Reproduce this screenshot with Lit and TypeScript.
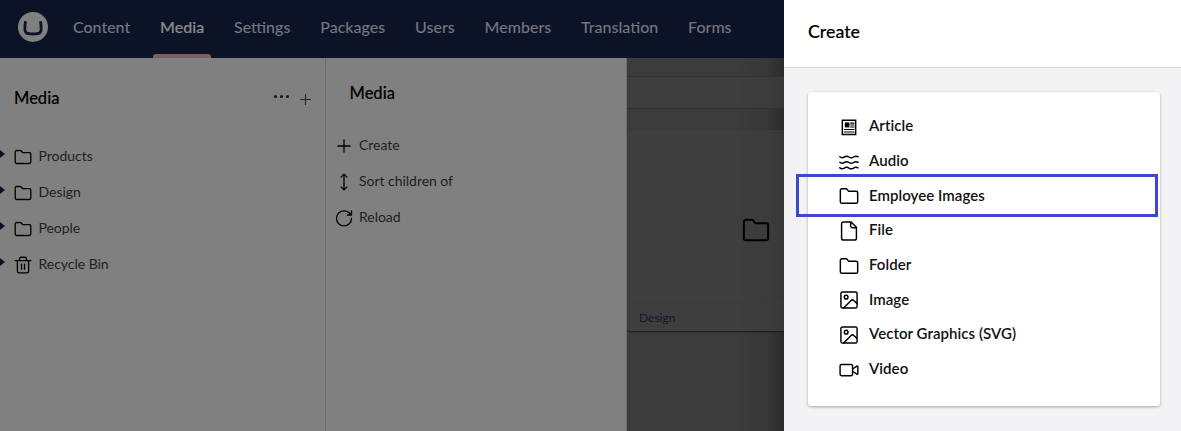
import { LitElement, html, css, svg, nothing } from "lit";
import { customElement, property } from "lit/decorators.js";
import { classMap } from "lit/directives/class-map.js";

const FOLDER = svg`<path d="M1.600 18.800V5.200A1.900 1.900 0 0 1 3.500 3.300H8.200a1.900 1.900 0 0 1 1.500.7l1.700 2.200h9.100a1.900 1.900 0 0 1 1.900 1.900v10.700a1.900 1.900 0 0 1-1.900 1.900H3.500a1.900 1.900 0 0 1-1.900-1.900z"/>`;
const IMAGE = svg`<rect x="2.300" y="2.300" width="19.400" height="19.400" rx="2"/><circle cx="8.600" cy="8.600" r="2.200"/><path d="M5.500 21.500 14.600 12.600a2.200 2.200 0 0 1 3.100 0L21.500 16"/>`;

const ICONS: Record<string, unknown> = {
  folder: FOLDER,
  image: IMAGE,
  trash: svg`<path d="M1.500 6.200h21M19.500 6.500v13.700a2.200 2.200 0 0 1-2.200 2.200H6.700a2.200 2.200 0 0 1-2.200-2.200V6.500M7.500 6V3.700a2 2 0 0 1 2-2h5a2 2 0 0 1 2 2V6M10 11v6.500M14 11v6.500"/>`,
  plus: svg`<path d="M4 12h16M12 4v16"/>`,
  sort: svg`<path d="M12 1.500v21M8 18.500l4 4 4-4M8 5.500l4-4 4 4"/>`,
  reload: svg`<path d="M22 12.500a10 10 0 1 1-10-10c2.800 0 5.200 1 7.200 2.800L22 8M22 2.500V8h-5.500"/>`,
  file: svg`<path d="M14.500 1.200H5.300a2.200 2.200 0 0 0-2.200 2.200v17.200a2.200 2.200 0 0 0 2.200 2.200h13.400a2.200 2.200 0 0 0 2.200-2.200V7.500zM14 1.500v4.500a2 2 0 0 0 2 2h4.500"/>`,
  video: svg`<rect x="1.300" y="5.500" width="15" height="13.300" rx="1.700"/><path d="m16.300 10.800 5.300-3.400q1-.5 1 .5v8.500q0 1-1 .5l-5.300-3.400"/>`,
  waves: svg`<path d="M1 5.700c1.700 1.500 3.400 1.500 5.400.3s3.700-1.200 5.500 0 3.700 1.200 5.500 0 3.700-1.200 5.500-.3M1 12.300c1.700 1.500 3.400 1.500 5.400.3s3.700-1.200 5.500 0 3.700 1.200 5.500 0 3.700-1.200 5.500-.3M1 19c1.700 1.500 3.400 1.500 5.400.3s3.700-1.200 5.500 0 3.700 1.200 5.500 0 3.700-1.200 5.500-.3"/>`,
  news: svg`<path d="M4 3.900h16v17H4z" stroke-linejoin="miter"/><path d="M7 6.500h5.500v6H7z" fill="currentColor" stroke="none"/><path d="M14 7.300h4M14 9.600h4M14 12h4M6.500 15h11.500M6.500 18h11.500" stroke-width="1.400"/>`,
};

@customElement("ui-icon")
class UiIcon extends LitElement {
  @property() name = "folder";
  static styles = css`
    :host { display: block; flex: none; width: 20px; height: 20px; }
    svg { display: block; width: 100%; height: 100%; }
  `;
  render() {
    return html`<svg viewBox="0 0 24 24" fill="none" stroke="currentColor" stroke-width="1.75" stroke-linecap="round" stroke-linejoin="round">${ICONS[this.name]}</svg>`;
  }
}

@customElement("app-root")
class AppRoot extends LitElement {
  static styles = css`
    :host {
      display: grid;
      grid-template-columns: 784px 397px;
      height: 431px;
      overflow: hidden;
      font-family: Lato, sans-serif;
      font-size: 14px;
      color: #000;
    }
    * { box-sizing: border-box; }
    .app { display: grid; grid-template-rows: 58px 1fr; min-width: 0; overflow: hidden; }
    .top { display: flex; background: #0d1327; padding-left: 18px; }
    .logo { width: 30px; height: 30px; margin: 12px 10px 0 0; flex: none; }
    .nav { display: flex; }
    .tab {
      display: flex; flex-direction: column; justify-content: space-between;
      padding: 0 14.950px; height: 58px; line-height: 54px; font-size: 16px; font-weight: 500;
      color: #74767e; white-space: nowrap;
    }
    .tab.active { color: #8a8a8a; -webkit-text-stroke: 0.2px currentColor; }
    .bar { height: 4px; margin: 0 -7px; border-radius: 3px 3px 0 0; background: #7b615e; }
    .label { height: 54px; }
    .body { display: grid; grid-template-columns: 326px 301px 157px; min-height: 0; }
    .tree { background: #808080; border-right: 1px solid #6c6c6d; }
    .tree-head { display: flex; align-items: center; height: 80px; padding: 0 13px 0 14px; }
    .title { font-size: 16.500px; font-weight: 500; line-height: 20px; -webkit-text-stroke: 0.15px currentColor; }
    .tree-head .title { flex: 1; margin-top: -1px; }
    .dots { display: flex; gap: 3px; margin: -3px 9.500px 0 0; }
    .dot { width: 3px; height: 3px; border-radius: 50%; background: #0d1327; }
    .add { width: 15px; height: 15px; margin: 2px -1px 0 0; color: #24262f; }
    .row { display: flex; align-items: center; height: 36px; }
    .caret { width: 5px; height: 8px; margin: 0 9px 4px 0; flex: none; }
    .tree .row ui-icon { width: 18px; height: 18px; margin: 1px 6.500px 0 0; color: #000; }
    .thin { font-size: 14px; line-height: 20px; color: #1f1f21; font-weight: 400; letter-spacing: -0.030px; }
    .actions { background: #808080; border-right: 1px solid #6c6c6d; }
    .actions .title { padding: 25px 0 0 23.500px; height: 69px; }
    .actions .row { padding-left: 9px; }
    .actions ui-icon { width: 18px; height: 18px; margin: 2px 6px 0 0; }
    .work { background: #3c3c3c; overflow: hidden; }
    .shade { background: linear-gradient(90deg, transparent 110px, #00000014 140px, #00000048 157px); height: 100%; }
    .strip { height: 19px; border-bottom: 1px solid #333; }
    .tools { height: 32px; background: #3f3f3f99; border-bottom: 1px solid #313131; }
    .card { height: 201px; margin: 21px 0 0; background: #3f3f3f99; border-radius: 3px 0 0 3px; box-shadow: 0 1px 2px #1a1a1a; display: flex; flex-direction: column; }
    .preview { flex: 1; display: flex; align-items: center; padding: 26px 0 0 115px; border-bottom: 1px solid #3b3b3b; }
    .preview ui-icon { width: 28px; height: 28px; }
    .caption { height: 27px; padding: 0 0 0 12px; line-height: 27px; font-size: 12px; color: #15182a; }
    .panel { display: grid; grid-template-rows: 68px 1fr; background: #f3f3f5; }
    .panel-head { background: #fff; border-bottom: 1px solid #d8d7d9; padding: 21px 24px; }
    .panel-head .title { font-size: 17.800px; }
    .box { width: 352.500px; height: 314px; margin: 24px 0 0 23.500px; background: #fff; border-radius: 3px; box-shadow: 0 1px 3px #00000050; padding: 16px 0 0 31.500px; }
    .type { position: relative; display: flex; align-items: center; height: 34.700px; font-size: 15px; font-weight: 600; color: #111; gap: 10px; }
    .type ui-icon { margin-top: 3px; color: #000; }
    .type span { letter-spacing: 0.050px; font-variant-ligatures: common-ligatures; }
    .mark { position: absolute; left: -43.500px; top: -3px; width: 362px; height: 43px; border: 3px solid #3d46cc; }
  `;

  private tabs = ["Content", "Media", "Settings", "Packages", "Users", "Members", "Translation", "Forms"];
  private tree = [["folder", "Products"], ["folder", "Design"], ["folder", "People"], ["trash", "Recycle Bin"]];
  private actions = [["plus", "Create"], ["sort", "Sort children of"], ["reload", "Reload"]];
  private types = [
    ["news", "Article"], ["waves", "Audio"], ["folder", "Employee Images"], ["file", "File"],
    ["folder", "Folder"], ["image", "Image"], ["image", "Vector Graphics (SVG)"], ["video", "Video"],
  ];

  render() {
    return html`
      <div class="app">
        <header class="top">
          <svg class="logo" viewBox="0 0 30 30">
            <circle cx="15" cy="15" r="15" fill="#808080"/>
            <path d="M7.500 9.200C6.400 16 6.700 19.600 8.200 20.800c1.800 1.500 11.800 1.500 13.600 0 1.500-1.200 1.800-4.800.7-11.600" fill="none" stroke="#0d1327" stroke-width="2.900"/>
          </svg>
          <nav class="nav">
            ${this.tabs.map((t) => {
              const active = t === "Media";
              return html`<div class=${classMap({ tab: true, active })}><span class="label">${t}</span>${active ? html`<div class="bar"></div>` : nothing}</div>`;
            })}
          </nav>
        </header>
        <div class="body">
          <section class="tree">
            <div class="tree-head">
              <div class="title">Media</div>
              <div class="dots"><div class="dot"></div><div class="dot"></div><div class="dot"></div></div>
              <ui-icon class="add" name="plus"></ui-icon>
            </div>
            ${this.tree.map(([icon, label]) => html`
              <div class="row">
                <svg class="caret" viewBox="0 0 5 8"><path d="M0 0l5 4-5 4z" fill="#0d1327"/></svg>
                <ui-icon name=${icon}></ui-icon><span class="thin">${label}</span>
              </div>`)}
          </section>
          <section class="actions">
            <div class="title">Media</div>
            ${this.actions.map(([icon, label]) => html`
              <div class="row"><ui-icon name=${icon}></ui-icon><span class="thin">${label}</span></div>`)}
          </section>
          <main class="work"><div class="shade">
            <div class="strip"></div>
            <div class="tools"></div>
            <div class="card">
              <div class="preview"><ui-icon name="folder"></ui-icon></div>
              <div class="caption">Design</div>
            </div>
          </div></main>
        </div>
      </div>
      <aside class="panel">
        <div class="panel-head"><div class="title">Create</div></div>
        <div class="box">
          ${this.types.map(([icon, label]) => html`
            <div class="type"><ui-icon name=${icon}></ui-icon><span>${label}</span>${label === "Employee Images" ? html`<div class="mark"></div>` : nothing}</div>`)}
        </div>
      </aside>`;
  }
}
